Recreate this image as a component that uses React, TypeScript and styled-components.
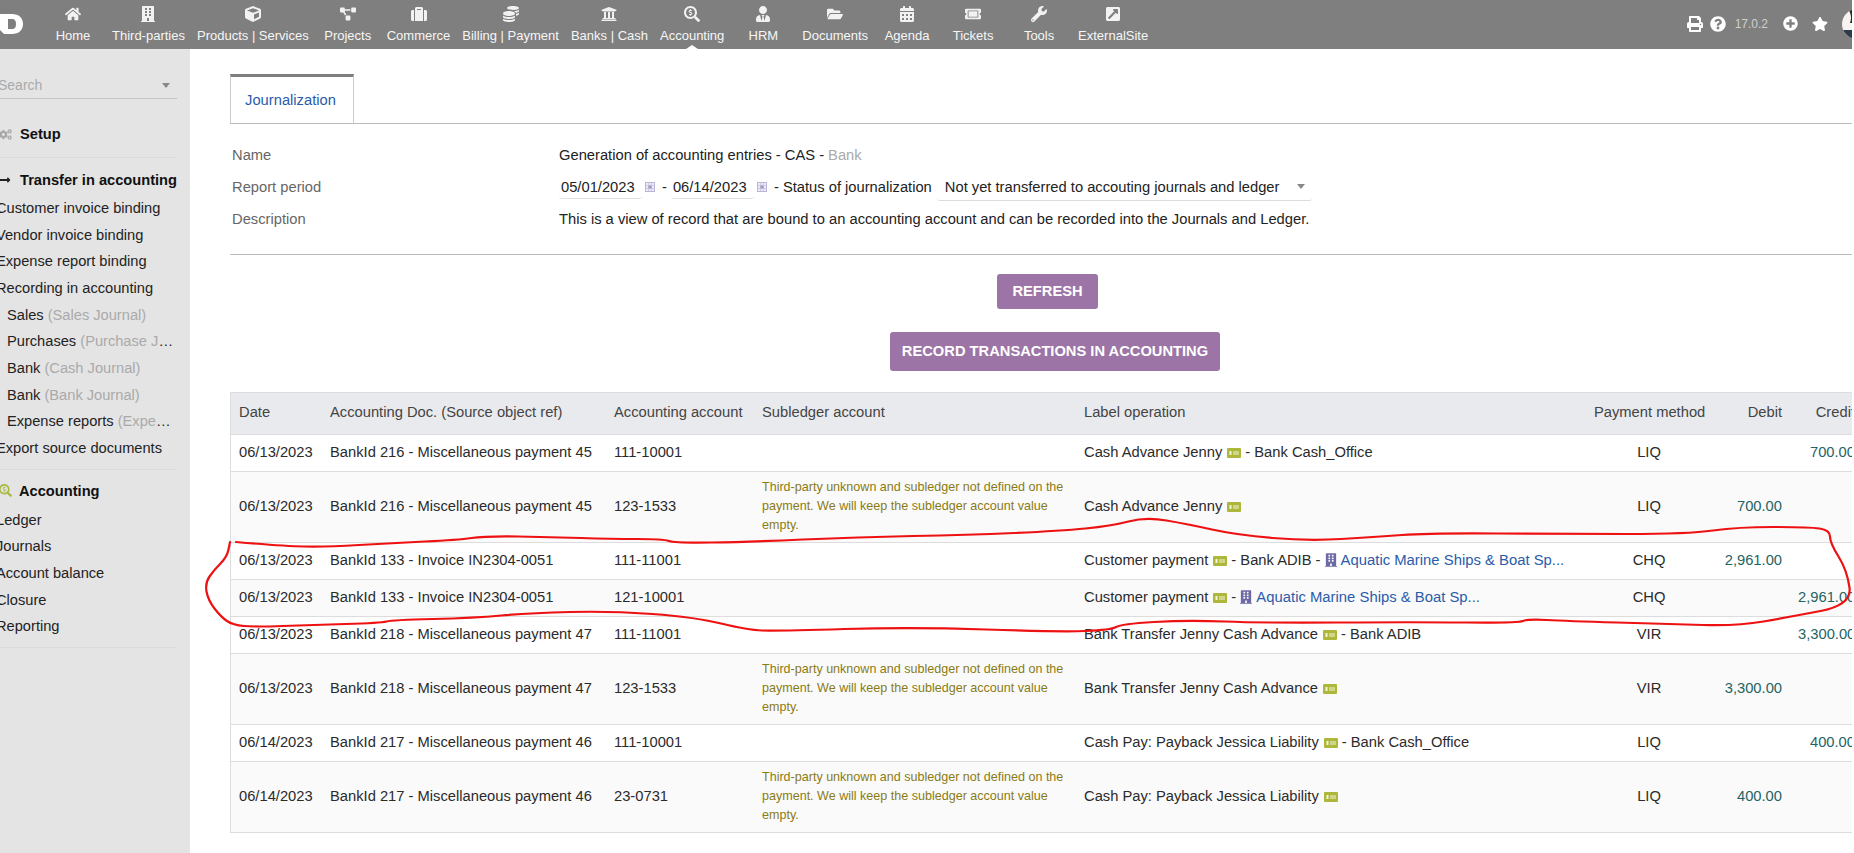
import React from 'react';
import styled, { createGlobalStyle } from 'styled-components';
import {
  FaHome, FaBuilding, FaCube, FaProjectDiagram, FaSuitcase, FaCoins, FaUniversity, FaSearchDollar,
  FaUserTie, FaFolderOpen, FaCalendarAlt, FaTicketAlt, FaWrench, FaExternalLinkSquareAlt,
  FaPrint, FaQuestionCircle, FaPlusCircle, FaStar, FaCogs, FaLongArrowAltRight,
} from 'react-icons/fa';

const Global = createGlobalStyle`
  html, body { margin: 0; padding: 0; background: #fff; overflow: hidden; }
  body { font-family: "Liberation Sans", Arial, sans-serif; font-size: 14.72px; color: #222; }
`;

const Page = styled.div`
  position: relative;
  width: 1852px;
  height: 853px;
  overflow: hidden;
  display: flex;
  flex-direction: column;
`;

const TopBar = styled.header`
  flex: none;
  height: 49px;
  background: #7f7f7f;
  display: flex;
  color: #f6f6f6;
`;

const Logo = styled.div`
  flex: none;
  width: 40px;
  display: flex;
  align-items: flex-start;
  padding-top: 14px;
  box-sizing: border-box;
`;

const NavList = styled.nav`
  display: flex;
`;

const NavItem = styled.div<{ $active?: boolean }>`
  position: relative;
  box-sizing: border-box;
  min-width: 66px;
  padding: 6px 6px 0;
  display: flex;
  flex-direction: column;
  align-items: center;
  font-size: 13px;
  line-height: 15px;
  white-space: nowrap;
  svg { width: 16px; height: 16px; margin-bottom: 6px; fill: #f2f2f2; }
  ${p => p.$active ? `
    &::after {
      content: '';
      position: absolute;
      left: 50%;
      bottom: 0;
      margin-left: -6px;
      border-left: 6px solid transparent;
      border-right: 6px solid transparent;
      border-bottom: 4px solid #fff;
    }
  ` : ''}
`;

const Tools = styled.div`
  margin-left: auto;
  display: flex;
  align-items: center;
  padding-bottom: 2px;
`;

const ToolIcon = styled.span<{ $ml: number; $size: number }>`
  display: flex;
  margin-left: ${p => p.$ml}px;
  svg { width: ${p => p.$size}px; height: ${p => p.$size}px; fill: #fff; }
`;

const Version = styled.span`
  margin-left: 9px;
  font-size: 12px;
  color: #cfcfcf;
`;

const Avatar = styled.svg`
  flex: none;
  width: 30px;
  height: 30px;
  margin-left: 14px;
  margin-right: -20px;
`;

const Body = styled.div`
  flex: 1;
  min-height: 0;
  display: flex;
`;

const Sidebar = styled.aside`
  flex: none;
  width: 190px;
  background: #e4e4e4;
  overflow: hidden;
  padding-top: 23px;
  box-sizing: border-box;
`;

const SideInner = styled.div`
  margin-left: -3px;
  width: 180px;
`;

const SearchBox = styled.div`
  height: 26px;
  border-bottom: 1px solid #c4c4c4;
  display: flex;
  align-items: center;
  justify-content: space-between;
  padding: 0 7px 0 1px;
  color: #aaa;
  font-size: 14px;
`;

const Caret = styled.span`
  width: 0;
  height: 0;
  border-left: 4px solid transparent;
  border-right: 4px solid transparent;
  border-top: 5px solid #888;
`;

const SideBlock = styled.section<{ $top?: number; $pt?: number; $bottom?: number }>`
  margin-top: ${p => p.$top ?? 0}px;
  padding: ${p => p.$pt ?? 9}px 0 ${p => p.$bottom ?? 7}px;
  border-bottom: 1px solid #dbdbdb;
`;

const SideTitle = styled.div<{ $gap?: number }>`
  display: flex;
  align-items: center;
  height: 26px;
  margin-bottom: ${p => p.$gap ?? 2}px;
  font-weight: bold;
  font-size: 14.65px;
  color: #111;
  white-space: nowrap;
`;

const SideIcon = styled.span<{ $color: string; $w: number; $size: number }>`
  flex: none;
  width: ${p => p.$w}px;
  display: flex;
  padding-left: 2px;
  box-sizing: border-box;
  svg { width: ${p => p.$size}px; height: ${p => p.$size}px; fill: ${p => p.$color}; }
`;

const SideItem = styled.div<{ $sub?: boolean }>`
  height: 26.67px;
  line-height: 26.67px;
  color: #222;
  font-size: 14.65px;
  margin-left: ${p => p.$sub ? 0 : -1}px;
  padding-left: ${p => p.$sub ? 10 : 0}px;
  white-space: nowrap;
  overflow: hidden;
  text-overflow: ellipsis;
  span { color: #aaa; }
`;

const Main = styled.main`
  flex: 1;
  min-width: 0;
  overflow: hidden;
  padding: 25px 0 0 40px;
`;

const TabStrip = styled.div`
  border-bottom: 1px solid #bbb;
  display: flex;
`;

const Tab = styled.div`
  box-sizing: border-box;
  width: 124px;
  height: 49px;
  padding-right: 3px;
  border-top: 3px solid #7f7f7f;
  border-left: 1px solid #ccc;
  border-right: 1px solid #ccc;
  display: flex;
  align-items: center;
  justify-content: center;
  color: #2a5caa;
`;

const Fields = styled.div`
  margin-top: 15px;
  padding-bottom: 19px;
  border-bottom: 1px solid #bbb;
`;

const FieldRow = styled.div`
  height: 32px;
  display: grid;
  grid-template-columns: 329px 1fr;
  align-items: center;
`;

const FieldLabel = styled.div`
  padding-left: 2px;
  color: #666;
`;

const FieldValue = styled.div`
  display: flex;
  align-items: center;
  white-space: nowrap;
  color: #222;
`;

const Muted = styled.span`
  color: #aaa;
  margin-left: 4px;
`;

const DateInput = styled.input`
  box-sizing: border-box;
  width: 83px;
  height: 24px;
  border: 0;
  border-bottom: 1px solid #e2e2e2;
  border-radius: 0 0 3px 3px;
  padding: 0 0 0 2px;
  outline: 0;
  background: transparent;
  font: 14.72px "Liberation Sans", Arial, sans-serif;
  color: #222;
`;

const CalIcon = styled.svg`
  flex: none;
  width: 10px;
  height: 10px;
  margin: 0 7px 0 3px;
`;

const Dash = styled.span`
  margin-right: 4px;
`;

const SelectBox = styled.div`
  box-sizing: border-box;
  width: 375px;
  height: 28px;
  margin-left: 5px;
  padding: 0 7px 0 8px;
  border-bottom: 1px solid #ddd;
  border-radius: 0 0 3px 3px;
  display: flex;
  align-items: center;
  justify-content: space-between;
`;

const ActionButton = styled.button<{ $left: number; $w: number; $h: number; $top: number }>`
  display: block;
  box-sizing: border-box;
  width: ${p => p.$w}px;
  height: ${p => p.$h}px;
  margin: ${p => p.$top}px 0 0 ${p => p.$left}px;
  padding: 0 0 2px;
  border: 0;
  border-radius: 3px;
  background: #9c75a6;
  color: #fff;
  font: bold 14.7px "Liberation Sans", Arial, sans-serif;
  white-space: nowrap;
`;

const Table = styled.table`
  table-layout: fixed;
  width: 1632px;
  margin-top: 21px;
  border-collapse: separate;
  border-spacing: 0;
  border-left: 1px solid #ddd;
  font-size: 14.72px;
`;

const Th = styled.th<{ $align?: string }>`
  box-sizing: border-box;
  height: 43px;
  padding: 0 8px 3px;
  background: #e9eaed;
  border-top: 1px solid #ddd;
  border-bottom: 1px solid #ddd;
  font-weight: normal;
  color: #444;
  white-space: nowrap;
  text-align: ${p => p.$align ?? 'left'};
`;

const Tr = styled.tr<{ $alt: boolean }>`
  background: ${p => p.$alt ? '#fafafa' : '#fff'};
`;

const Td = styled.td<{ $align?: string; $amount?: boolean }>`
  box-sizing: border-box;
  height: 37px;
  padding: 0 8px 2px;
  border-bottom: 1px solid #ddd;
  white-space: nowrap;
  color: ${p => p.$amount ? '#1f6464' : '#2b2b2b'};
  text-align: ${p => p.$align ?? 'left'};
`;

const WarnCell = styled.td`
  box-sizing: border-box;
  height: 37px;
  padding: 6px 8px 7px;
  border-bottom: 1px solid #ddd;
  font-size: 12.55px;
  line-height: 19px;
  color: #8a7b14;
`;

const CardSvg = styled.svg`
  width: 14px;
  height: 10px;
  margin: 0 4px 0 5px;
  vertical-align: -1px;
`;

const BuildingIcon = styled(FaBuilding)`
  width: 12px;
  height: 14px;
  margin: 0 4px 0 0;
  fill: #6c69a4;
  vertical-align: -2px;
`;

const PartyLink = styled.a`
  color: #2a5caa;
  font-size: 14.85px;
  text-decoration: none;
`;

const RedInk = styled.svg`
  position: absolute;
  left: 0;
  top: 0;
  width: 1852px;
  height: 853px;
  pointer-events: none;
`;

const navItems: [string, React.ComponentType][] = [
  ['Home', FaHome], ['Third-parties', FaBuilding], ['Products | Services', FaCube], ['Projects', FaProjectDiagram],
  ['Commerce', FaSuitcase], ['Billing | Payment', FaCoins], ['Banks | Cash', FaUniversity], ['Accounting', FaSearchDollar],
  ['HRM', FaUserTie], ['Documents', FaFolderOpen], ['Agenda', FaCalendarAlt], ['Tickets', FaTicketAlt],
  ['Tools', FaWrench], ['ExternalSite', FaExternalLinkSquareAlt],
];

type Row = {
  date: string; doc: string; acct: string; warn?: boolean; label: string; bank?: string; party?: boolean;
  pm: string; debit?: string; credit?: string;
};

const rows: Row[] = [
  { date: '06/13/2023', doc: 'BankId 216 - Miscellaneous payment 45', acct: '111-10001', label: 'Cash Advance Jenny', bank: 'Bank Cash_Office', pm: 'LIQ', credit: '700.00' },
  { date: '06/13/2023', doc: 'BankId 216 - Miscellaneous payment 45', acct: '123-1533', warn: true, label: 'Cash Advance Jenny', pm: 'LIQ', debit: '700.00' },
  { date: '06/13/2023', doc: 'BankId 133 - Invoice IN2304-0051', acct: '111-11001', label: 'Customer payment', bank: 'Bank ADIB', party: true, pm: 'CHQ', debit: '2,961.00' },
  { date: '06/13/2023', doc: 'BankId 133 - Invoice IN2304-0051', acct: '121-10001', label: 'Customer payment', party: true, pm: 'CHQ', credit: '2,961.00' },
  { date: '06/13/2023', doc: 'BankId 218 - Miscellaneous payment 47', acct: '111-11001', label: 'Bank Transfer Jenny Cash Advance', bank: 'Bank ADIB', pm: 'VIR', credit: '3,300.00' },
  { date: '06/13/2023', doc: 'BankId 218 - Miscellaneous payment 47', acct: '123-1533', warn: true, label: 'Bank Transfer Jenny Cash Advance', pm: 'VIR', debit: '3,300.00' },
  { date: '06/14/2023', doc: 'BankId 217 - Miscellaneous payment 46', acct: '111-10001', label: 'Cash Pay: Payback Jessica Liability', bank: 'Bank Cash_Office', pm: 'LIQ', credit: '400.00' },
  { date: '06/14/2023', doc: 'BankId 217 - Miscellaneous payment 46', acct: '23-0731', warn: true, label: 'Cash Pay: Payback Jessica Liability', pm: 'LIQ', debit: '400.00' },
];

const columnWidths = [91, 284, 148, 322, 510, 126, 78, 73];

const inkPoints: [number, number][] = [
  [236, 542], [282, 546], [326, 547], [392, 543], [458, 540], [485, 536], [551, 537], [611, 539], [663, 539], [675, 543],
  [748, 542], [858, 537], [968, 535], [1060, 531], [1111, 526], [1146, 517], [1187, 524], [1237, 535], [1308, 541],
  [1374, 537], [1430, 533], [1566, 534], [1688, 534], [1738, 527], [1809, 527], [1830, 530], [1830, 543], [1847, 570],
  [1852, 605], [1789, 617], [1738, 626], [1668, 624], [1566, 621], [1528, 619], [1518, 623], [1414, 622], [1262, 623],
  [1187, 620], [1121, 624], [1111, 630], [1060, 632], [913, 627], [776, 631], [748, 630], [694, 617], [611, 611],
  [529, 613], [474, 618], [392, 620], [381, 623], [310, 625], [255, 627], [233, 625], [221, 617], [208, 600],
  [205, 583], [214, 570], [227, 557], [230, 542],
];

const smoothPath = (pts: [number, number][]) => {
  let d = `M${pts[0][0]} ${pts[0][1]}`;
  for (let i = 1; i < pts.length - 1; i++) {
    const mx = (pts[i][0] + pts[i + 1][0]) / 2;
    const my = (pts[i][1] + pts[i + 1][1]) / 2;
    d += ` Q${pts[i][0]} ${pts[i][1]} ${mx} ${my}`;
  }
  const last = pts[pts.length - 1];
  return `${d} L${last[0]} ${last[1]}`;
};

const Calendar = () => (
  <CalIcon viewBox="0 0 10 10">
    <rect x="0.5" y="0.5" width="9" height="9" fill="#ecebf6" stroke="#b9b7d8" />
    <path d="M3.5 1v8M6.5 1v8M1 3.5h8M1 6.5h8" stroke="#cfcde6" strokeWidth="1" />
    <rect x="3.5" y="3.5" width="3" height="3" fill="#a394c8" />
  </CalIcon>
);

const CardIcon = () => (
  <CardSvg viewBox="0 0 14 10">
    <rect width="14" height="10" rx="1" fill="#adb73a" />
    <rect x="2.5" y="3" width="2" height="4" fill="#f3f5d8" />
    <rect x="6" y="3.5" width="6" height="1" fill="#f3f5d8" />
    <rect x="6" y="5.5" width="6" height="1" fill="#f3f5d8" />
  </CardSvg>
);

const LabelCell = ({ row }: { row: Row }) => (
  <Td>
    {row.label}
    <CardIcon />
    {row.bank ? `- ${row.bank}` : ''}
    {row.party ? (
      <>
        {row.bank ? ' - ' : '- '}
        <BuildingIcon />
        <PartyLink href="#">Aquatic Marine Ships &amp; Boat Sp...</PartyLink>
      </>
    ) : null}
  </Td>
);

export default function App() {
  return (
    <Page>
      <Global />
      <TopBar>
        <Logo>
          <svg width="24" height="20" viewBox="0 0 24 20">
            <path
              fillRule="evenodd"
              fill="#fff"
              d="M0 0H12C19 0 23 4 23 10C23 16 19 20 12 20H4L0 16ZM8 5V15H12C15 15 16 13 16 10C16 7 15 5 12 5Z"
            />
          </svg>
        </Logo>
        <NavList>
          {navItems.map(([name, Icon]) => (
            <NavItem key={name} $active={name === 'Accounting'}>
              <Icon />
              {name}
            </NavItem>
          ))}
        </NavList>
        <Tools>
          <ToolIcon $ml={0} $size={16}><FaPrint /></ToolIcon>
          <ToolIcon $ml={7} $size={16}><FaQuestionCircle /></ToolIcon>
          <Version>17.0.2</Version>
          <ToolIcon $ml={15} $size={15}><FaPlusCircle /></ToolIcon>
          <ToolIcon $ml={14} $size={16}><FaStar /></ToolIcon>
          <Avatar viewBox="0 0 30 30">
            <defs>
              <clipPath id="avatar-clip"><circle cx="15" cy="15" r="15" /></clipPath>
            </defs>
            <g clipPath="url(#avatar-clip)">
              <rect width="30" height="30" fill="#f6f3f0" />
              <path d="M6 0H30V14H8C10 9 9 4 6 0Z" fill="#2c2a2c" />
              <path d="M0 21H14V30H0Z" fill="#2f3a48" />
            </g>
          </Avatar>
        </Tools>
      </TopBar>
      <Body>
        <Sidebar>
          <SideInner>
            <SearchBox>Search<Caret /></SearchBox>
            <SideBlock $top={13} $bottom={8}>
              <SideTitle><SideIcon $color="#a8a8a8" $w={23} $size={13}><FaCogs /></SideIcon>Setup</SideTitle>
            </SideBlock>
            <SideBlock>
              <SideTitle><SideIcon $color="#222" $w={23} $size={12}><FaLongArrowAltRight /></SideIcon>Transfer in accounting</SideTitle>
              <SideItem>Customer invoice binding</SideItem>
              <SideItem>Vendor invoice binding</SideItem>
              <SideItem>Expense report binding</SideItem>
              <SideItem>Recording in accounting</SideItem>
              <SideItem $sub>Sales <span>(Sales Journal)</span></SideItem>
              <SideItem $sub>Purchases <span>(Purchase Journal)</span></SideItem>
              <SideItem $sub>Bank <span>(Cash Journal)</span></SideItem>
              <SideItem $sub>Bank <span>(Bank Journal)</span></SideItem>
              <SideItem $sub>Expense reports <span>(Expense reports Journal)</span></SideItem>
              <SideItem>Export source documents</SideItem>
            </SideBlock>
            <SideBlock $pt={8} $bottom={7}>
              <SideTitle $gap={3}><SideIcon $color="#a9b83c" $w={22} $size={13}><FaSearchDollar /></SideIcon>Accounting</SideTitle>
              <SideItem>Ledger</SideItem>
              <SideItem>Journals</SideItem>
              <SideItem>Account balance</SideItem>
              <SideItem>Closure</SideItem>
              <SideItem>Reporting</SideItem>
            </SideBlock>
          </SideInner>
        </Sidebar>
        <Main>
          <TabStrip><Tab>Journalization</Tab></TabStrip>
          <Fields>
            <FieldRow>
              <FieldLabel>Name</FieldLabel>
              <FieldValue>Generation of accounting entries - CAS -<Muted>Bank</Muted></FieldValue>
            </FieldRow>
            <FieldRow>
              <FieldLabel>Report period</FieldLabel>
              <FieldValue>
                <DateInput readOnly value="05/01/2023" />
                <Calendar />
                <Dash>-</Dash>
                <DateInput readOnly value="06/14/2023" />
                <Calendar />
                - Status of journalization
                <SelectBox>Not yet transferred to accouting journals and ledger<Caret /></SelectBox>
              </FieldValue>
            </FieldRow>
            <FieldRow>
              <FieldLabel>Description</FieldLabel>
              <FieldValue>This is a view of record that are bound to an accounting account and can be recorded into the Journals and Ledger.</FieldValue>
            </FieldRow>
          </Fields>
          <ActionButton $left={767} $w={101} $h={35} $top={19}>REFRESH</ActionButton>
          <ActionButton $left={660} $w={330} $h={39} $top={23}>RECORD TRANSACTIONS IN ACCOUNTING</ActionButton>
          <Table>
            <colgroup>
              {columnWidths.map((w, i) => <col key={i} width={w} />)}
            </colgroup>
            <thead>
              <tr>
                <Th>Date</Th>
                <Th>Accounting Doc. (Source object ref)</Th>
                <Th>Accounting account</Th>
                <Th>Subledger account</Th>
                <Th>Label operation</Th>
                <Th $align="center">Payment method</Th>
                <Th $align="right">Debit</Th>
                <Th $align="right">Credit</Th>
              </tr>
            </thead>
            <tbody>
              {rows.map((row, i) => (
                <Tr key={i} $alt={i % 2 === 1}>
                  <Td>{row.date}</Td>
                  <Td>{row.doc}</Td>
                  <Td>{row.acct}</Td>
                  {row.warn
                    ? <WarnCell>Third-party unknown and subledger not defined on the payment. We will keep the subledger account value empty.</WarnCell>
                    : <Td />}
                  <LabelCell row={row} />
                  <Td $align="center">{row.pm}</Td>
                  <Td $align="right" $amount>{row.debit}</Td>
                  <Td $align="right" $amount>{row.credit}</Td>
                </Tr>
              ))}
            </tbody>
          </Table>
        </Main>
      </Body>
      <RedInk viewBox="0 0 1852 853">
        <path d={smoothPath(inkPoints)} fill="none" stroke="#ee1111" strokeWidth="2.2" strokeLinecap="round" strokeLinejoin="round" />
      </RedInk>
    </Page>
  );
}
